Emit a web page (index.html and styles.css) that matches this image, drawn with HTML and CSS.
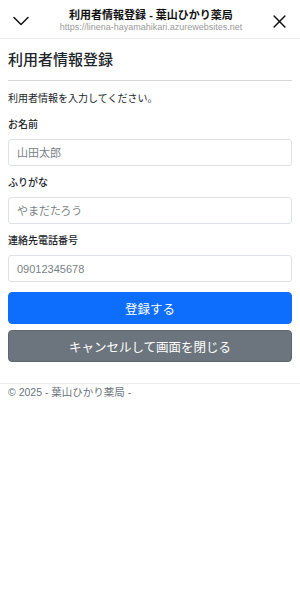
FILE: index.html
```html
<!DOCTYPE html>
<html lang="ja">
<head>
<meta charset="utf-8">
<title>利用者情報登録 - 葉山ひかり薬局</title>
<link rel="stylesheet" href="styles.css">
</head>
<body>
<header class="topbar">
  <svg class="icon icon-chevron" viewBox="0 0 16 10" width="16" height="10"><path d="M1 1.5 L8 8.5 L15 1.5" fill="none" stroke="#111" stroke-width="1.5" stroke-linecap="round" stroke-linejoin="round"/></svg>
  <div class="topbar-titles">
    <div class="topbar-title">利用者情報登録 - 葉山ひかり薬局</div>
    <div class="topbar-url">https://linena-hayamahikari.azurewebsites.net</div>
  </div>
  <svg class="icon icon-close" viewBox="0 0 12 12" width="13" height="13"><path d="M1 1 L11 11 M11 1 L1 11" fill="none" stroke="#111" stroke-width="1.4" stroke-linecap="round"/></svg>
</header>
<main class="content">
  <h1 class="page-title">利用者情報登録</h1>
  <hr class="divider">
  <p class="lead">利用者情報を入力してください。</p>
  <form class="form">
    <div class="field">
      <label class="field-label" for="name">お名前</label>
      <input class="field-input" id="name" type="text" placeholder="山田太郎">
    </div>
    <div class="field">
      <label class="field-label" for="kana">ふりがな</label>
      <input class="field-input" id="kana" type="text" placeholder="やまだたろう">
    </div>
    <div class="field">
      <label class="field-label" for="tel">連絡先電話番号</label>
      <input class="field-input" id="tel" type="tel" placeholder="09012345678">
    </div>
    <button type="button" class="btn btn-primary">登録する</button>
    <button type="button" class="btn btn-secondary">キャンセルして画面を閉じる</button>
  </form>
</main>
<footer class="footer">
  <div class="footer-text">© 2025 - 葉山ひかり薬局 -</div>
</footer>
</body>
</html>
```
FILE: styles.css
```css
* { box-sizing: border-box; }
html, body { margin: 0; padding: 0; background: #fff; }
body {
  font-family: "Liberation Sans", "Noto Sans CJK JP", sans-serif;
  color: #212529;
}
.topbar {
  height: 39px;
  border-bottom: 1px solid #ececec;
  display: flex;
  align-items: center;
  justify-content: space-between;
  padding: 0 14px 0 13px;
}
.icon { display: block; flex: none; }
.icon-chevron { margin-top: 3px; }
.icon-close { margin-top: 4px; }
.topbar-titles {
  display: flex;
  flex-direction: column;
  align-items: center;
  padding-top: 2px;
}
.topbar-title {
  font-size: 11px;
  font-weight: 700;
  line-height: 14px;
  color: #111;
}
.topbar-url {
  font-size: 9px;
  line-height: 11px;
  color: #9a9a9a;
}
.content { padding: 0 8px; }
.page-title {
  margin: 11px 0 0;
  font-size: 15px;
  font-weight: 500;
  line-height: 20px;
}
.divider {
  margin: 10px 0 0;
  border: 0;
  border-top: 1px solid #d6d6d6;
}
.lead {
  margin: 11px 0 0;
  font-size: 10px;
  line-height: 14px;
}
.form { margin-top: 12px; display: flex; flex-direction: column; }
.field { display: flex; flex-direction: column; margin-bottom: 10px; }
.field-label {
  font-size: 10px;
  line-height: 14px;
  font-weight: 500;
  margin-bottom: 7px;
}
.field-input {
  height: 27px;
  border: 1px solid #dee2e6;
  border-radius: 3px;
  padding: 0 8px;
  font-family: inherit;
  font-size: 11px;
  color: #212529;
  background: #fff;
}
.field-input::placeholder { color: #7a7f85; }
.btn {
  height: 32px;
  border: 1px solid transparent;
  border-radius: 4px;
  font-family: inherit;
  font-size: 12.5px;
  color: #fff;
  padding: 0;
}
.btn-primary { background: #0d6efd; border-color: #0d6efd; }
.btn-secondary { background: #6c757d; border-color: #5f676e; margin-top: 6px; }
.footer {
  margin-top: 21px;
  border-top: 1px solid #e9e9e9;
  padding: 1px 8px 0;
}
.footer-text {
  font-size: 10.5px;
  line-height: 14px;
  color: #6c757d;
}
```
